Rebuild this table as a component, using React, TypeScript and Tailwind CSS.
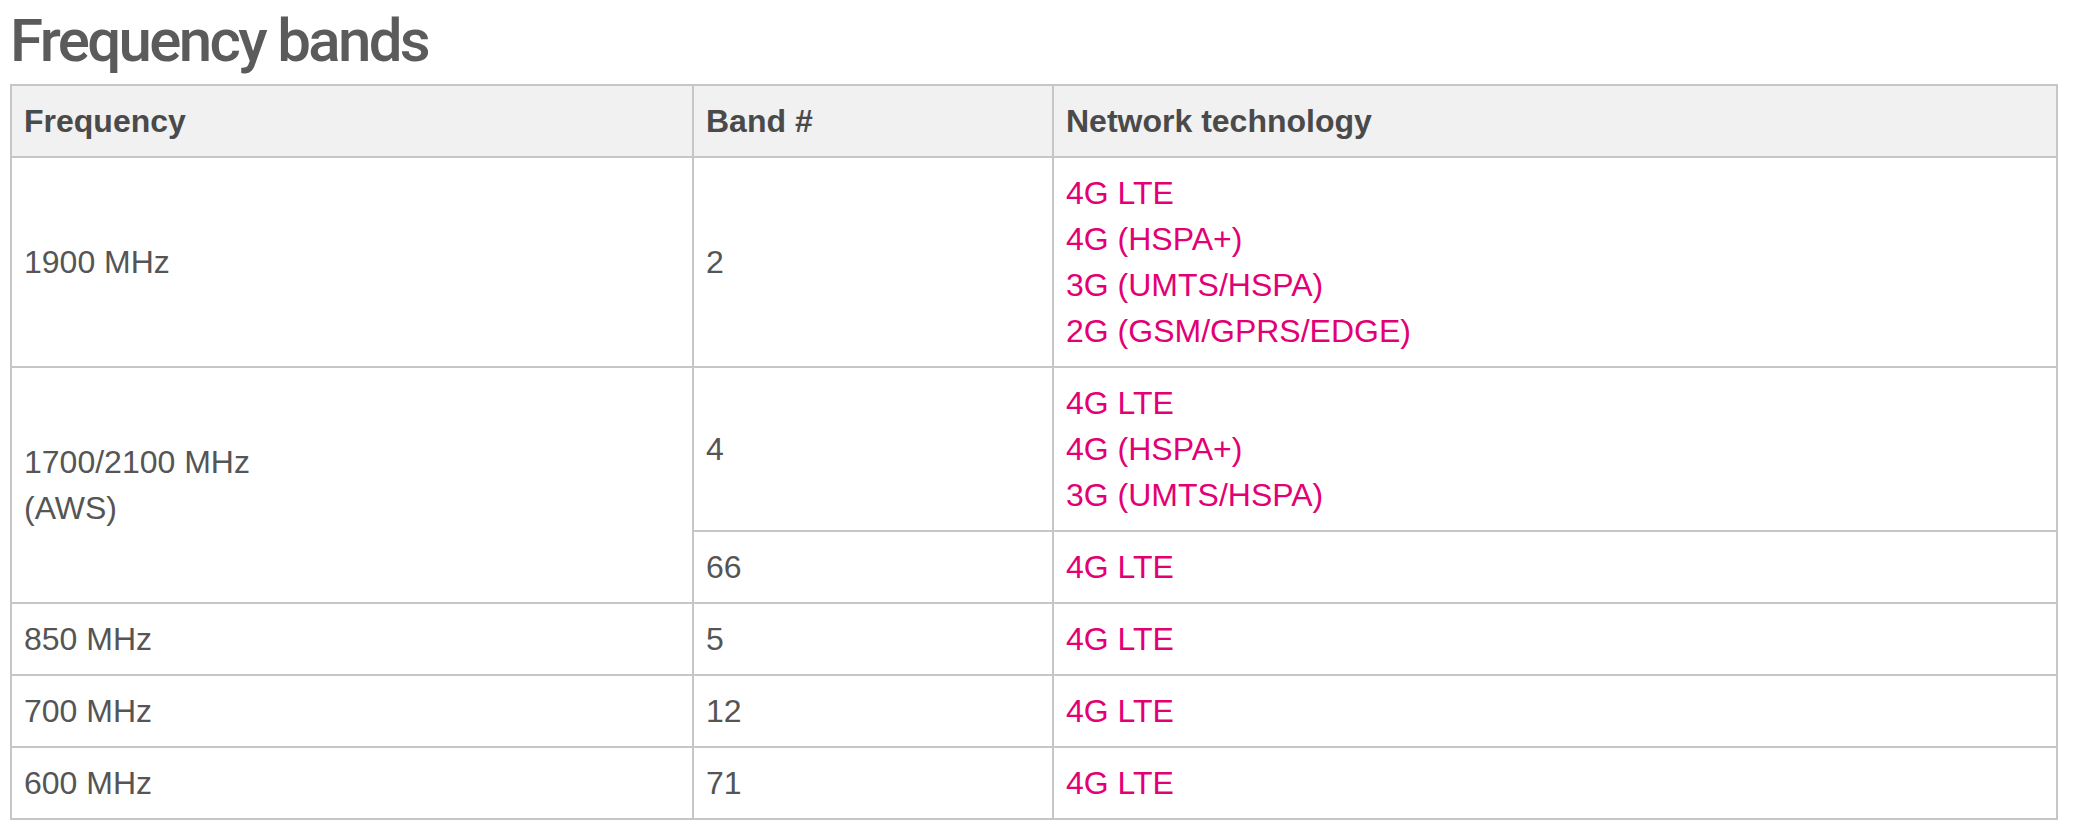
import React from 'react';

interface BandRow {
  band: string;
  tech: string[];
}

interface FrequencyGroup {
  frequency: string[];
  bands: BandRow[];
}

const groups: FrequencyGroup[] = [
  {
    frequency: ['1900 MHz'],
    bands: [{ band: '2', tech: ['4G LTE', '4G (HSPA+)', '3G (UMTS/HSPA)', '2G (GSM/GPRS/EDGE)'] }]
  },
  {
    frequency: ['1700/2100 MHz', '(AWS)'],
    bands: [
      { band: '4', tech: ['4G LTE', '4G (HSPA+)', '3G (UMTS/HSPA)'] },
      { band: '66', tech: ['4G LTE'] }
    ]
  },
  { frequency: ['850 MHz'], bands: [{ band: '5', tech: ['4G LTE'] }] },
  { frequency: ['700 MHz'], bands: [{ band: '12', tech: ['4G LTE'] }] },
  { frequency: ['600 MHz'], bands: [{ band: '71', tech: ['4G LTE'] }] }
];

const cell = 'border-2 border-[#c6c6c6] px-3 py-3 text-left align-middle';

const App: React.FC = () => {
  return (
    <div className="min-h-screen bg-white pl-[10px] pt-[10px] font-['Liberation_Sans',Arial,sans-serif] text-[#555555]">
      <h2 className="mb-[13px] font-['Roboto',sans-serif] text-[60px] font-medium leading-[61px] tracking-[-0.044em] text-[#5b5b5b]">
        Frequency bands
      </h2>

      <table className="w-[2048px] table-fixed border-collapse text-[32px] leading-[46px]">
        <colgroup>
          <col className="w-[682px]" />
          <col className="w-[360px]" />
          <col className="w-[1004px]" />
        </colgroup>
        <thead>
          <tr className="bg-[#f1f1f1] text-[#4a4a4a]">
            <th className={`${cell} font-bold`}>Frequency</th>
            <th className={`${cell} font-bold`}>Band #</th>
            <th className={`${cell} font-bold`}>Network technology</th>
          </tr>
        </thead>
        <tbody>
          {groups.map((group) =>
            group.bands.map((row, i) => (
              <tr key={`${group.frequency[0]}-${row.band}`}>
                {i === 0 && (
                  <td className={cell} rowSpan={group.bands.length}>
                    {group.frequency.map((line) => (
                      <div key={line}>{line}</div>
                    ))}
                  </td>
                )}
                <td className={cell}>{row.band}</td>
                <td className={`${cell} text-[#e20074]`}>
                  {row.tech.map((t) => (
                    <div key={t}>{t}</div>
                  ))}
                </td>
              </tr>
            ))
          )}
        </tbody>
      </table>
    </div>
  );
};

export default App;
